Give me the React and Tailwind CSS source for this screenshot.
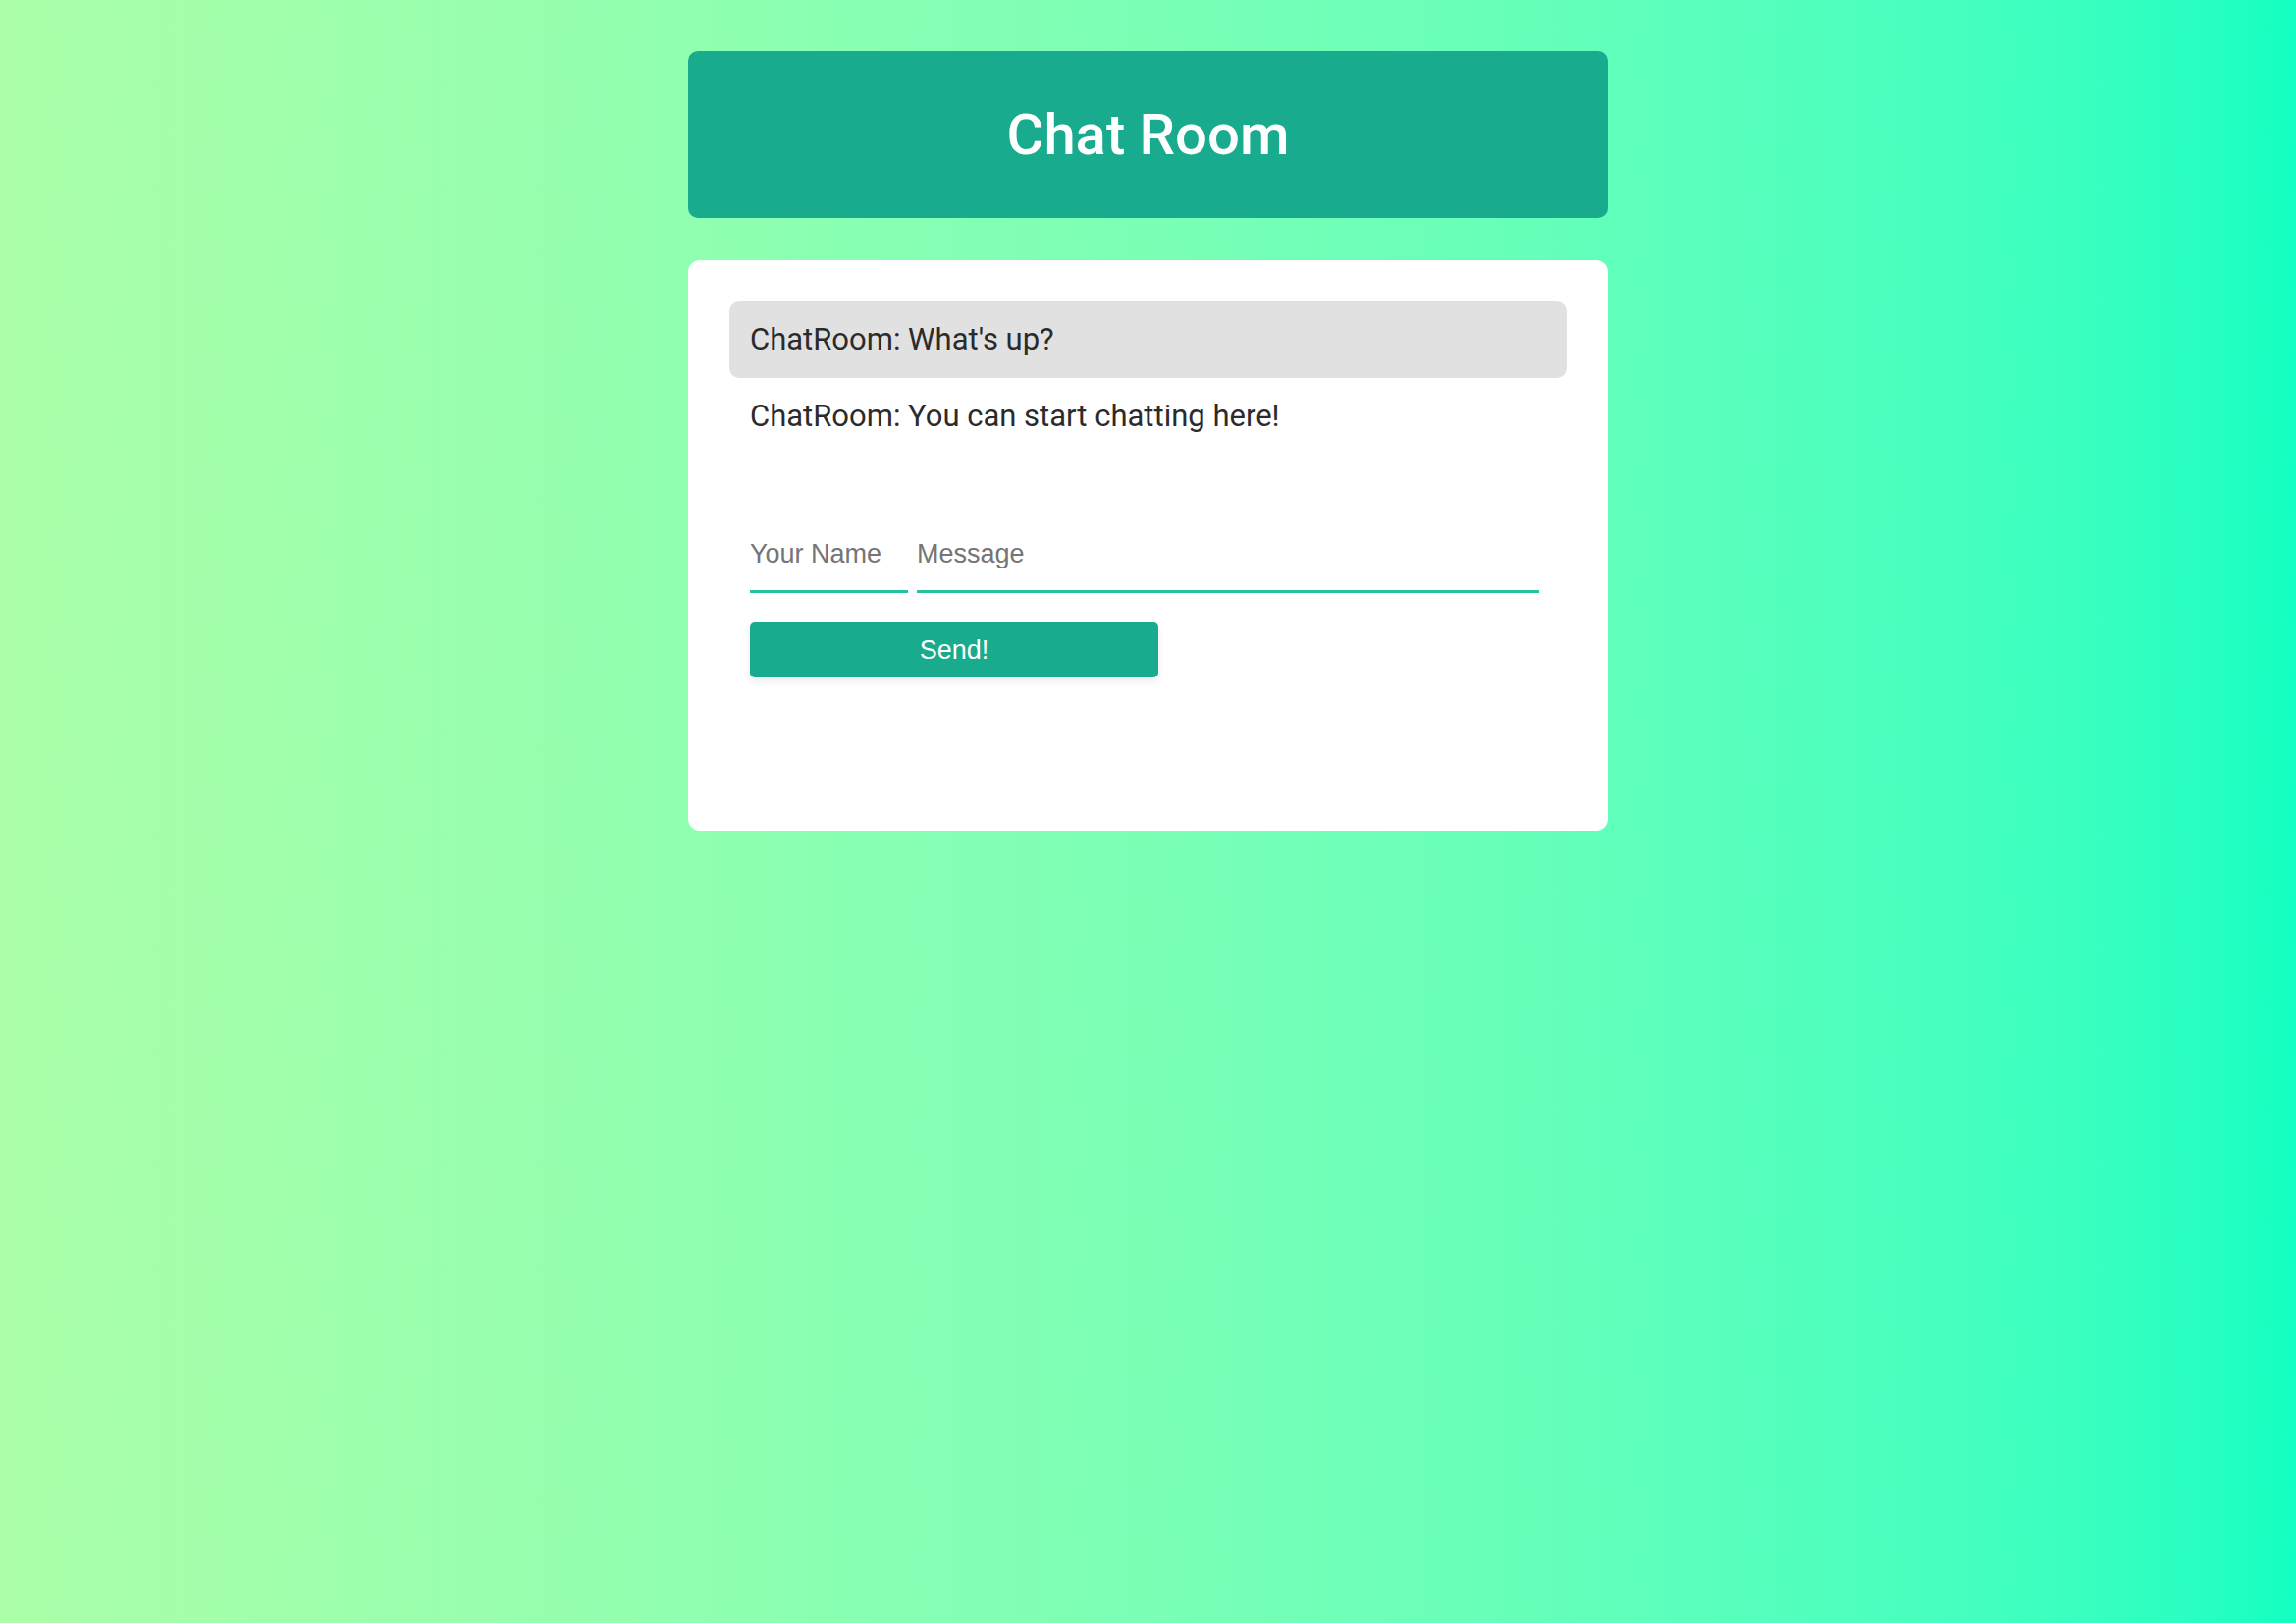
import React from 'react';

const messages = [
  { id: 1, author: 'ChatRoom', text: "What's up?", highlight: true },
  { id: 2, author: 'ChatRoom', text: 'You can start chatting here!', highlight: false },
];

export default function App() {
  return (
    <div className="min-h-screen w-full bg-gradient-to-r from-[#abffa8] to-[#12ffc2] flex flex-col items-center font-['Roboto',sans-serif]">
      <header className="mt-[52px] w-[937px] h-[170px] rounded-[10px] bg-[#19ab8d] flex items-center justify-center">
        <h1 className="text-white text-[58px] font-medium leading-none">Chat Room</h1>
      </header>

      <main className="mt-[43px] w-[937px] h-[581px] bg-white rounded-[12px] p-[42px]">
        <ul>
          {messages.map((m) => (
            <li
              key={m.id}
              className={
                'h-[78px] px-[21px] flex items-center rounded-[10px] text-[31px] text-[#2b2b2b] ' +
                (m.highlight ? 'bg-[#e1e1e1]' : '')
              }
            >
              {m.author}: {m.text}
            </li>
          ))}
        </ul>

        <form className="mt-[77px] ml-[21px] font-['Liberation_Sans',Arial,sans-serif]" onSubmit={(e) => e.preventDefault()}>
          <div className="flex gap-[9px]">
            <input
              placeholder="Your Name"
              className="w-[161px] h-[64px] pt-[8px] pb-[20px] border-b-[3px] border-[#26c2a0] outline-none text-[27px] text-[#333] placeholder:text-[#757575]"
            />
            <input
              placeholder="Message"
              className="w-[634px] h-[64px] pt-[8px] pb-[20px] border-b-[3px] border-[#26c2a0] outline-none text-[27px] text-[#333] placeholder:text-[#757575]"
            />
          </div>
          <button
            type="submit"
            className="mt-[30px] w-[416px] h-[56px] rounded-[5px] bg-[#19ab8d] text-white text-[27px] shadow-[0_4px_8px_rgba(0,0,0,0.08)]"
          >
            Send!
          </button>
        </form>
      </main>
    </div>
  );
}
